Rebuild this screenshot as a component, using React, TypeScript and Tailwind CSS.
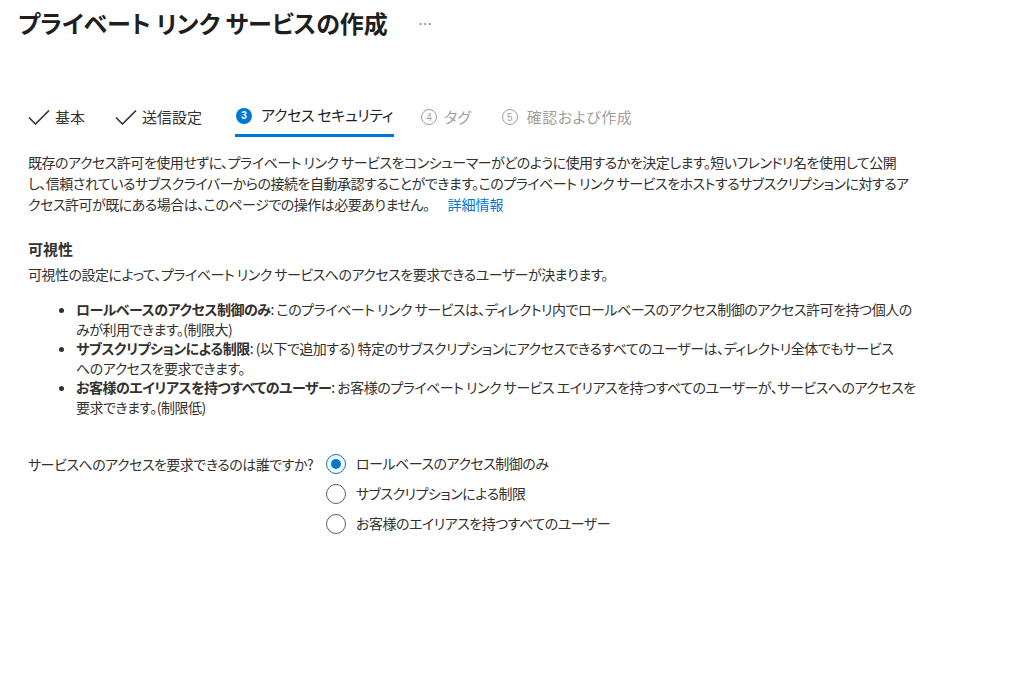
import React from 'react';

const jp = { fontFamily: '"Noto Sans CJK JP", "Noto Sans", sans-serif' };

function Check() {
  return (
    <svg width="22" height="16" viewBox="0 0 22 16" className="shrink-0">
      <path d="M1 8.5 L7.5 15 L21 1.5" fill="none" stroke="#323130" strokeWidth="1.6" />
    </svg>
  );
}

function Radio({ checked, label }: { checked?: boolean; label: string }) {
  return (
    <div className="flex items-center gap-[10px] h-[20px]">
      <span
        className={
          checked
            ? 'w-[20px] h-[20px] rounded-full border border-[#0078d4] flex items-center justify-center shrink-0'
            : 'w-[20px] h-[20px] rounded-full border border-[#605e5c] shrink-0'
        }
      >
        {checked && <span className="w-[10px] h-[10px] rounded-full bg-[#0078d4]" />}
      </span>
      <span className="text-[14px] text-[#323130]">{label}</span>
    </div>
  );
}

export default function App() {
  return (
    <div className="w-[1024px] h-[685px] bg-white text-[#323130] overflow-hidden [font-feature-settings:'palt']" style={jp}>
      {/* Header */}
      <div className="flex items-center pl-[18px] pt-[2px] h-[44px]">
        <h1 className="text-[24px] font-semibold text-[#201f1e]">プライベート リンク サービスの作成</h1>
        <span className="ml-[30px] text-[14px] text-[#605e5c] tracking-[1px]">…</span>
      </div>

      {/* Steps */}
      <div className="flex items-end pl-[28px] mt-[60px] h-[33px] text-[15px]">
        <div className="flex items-center gap-[5px] h-full pb-[7px]">
          <Check />
          <span>基本</span>
        </div>
        <div className="flex items-center gap-[5px] h-full pb-[7px] ml-[30px]">
          <Check />
          <span>送信設定</span>
        </div>
        <div className="flex items-center gap-[9px] h-full pb-[7px] ml-[33px] px-[1px] border-b-[3px] border-[#0078d4]">
          <span className="w-[16px] h-[16px] rounded-full bg-[#0078d4] text-white text-[10px] font-bold flex items-center justify-center" style={{ fontFamily: '"Liberation Sans", sans-serif' }}>3</span>
          <span className="text-[#201f1e] tracking-[-0.3px]">アクセス セキュリティ</span>
        </div>
        <div className="flex items-center gap-[7px] h-full pb-[7px] ml-[27px] text-[#a19f9d]">
          <span className="w-[16px] h-[16px] rounded-full border border-[#a19f9d] text-[10px] flex items-center justify-center" style={{ fontFamily: '"Liberation Sans", sans-serif' }}>4</span>
          <span>タグ</span>
        </div>
        <div className="flex items-center gap-[9px] h-full pb-[7px] ml-[31px] text-[#a19f9d]">
          <span className="w-[16px] h-[16px] rounded-full border border-[#a19f9d] text-[10px] flex items-center justify-center" style={{ fontFamily: '"Liberation Sans", sans-serif' }}>5</span>
          <span className="tracking-[0.5px]">確認および作成</span>
        </div>
      </div>

      {/* Intro */}
      <p className="pl-[28px] mt-[15px] text-[14px] leading-[21px] tracking-[-0.5px] whitespace-nowrap">
        既存のアクセス許可を使用せずに、プライベート リンク サービスをコンシューマーがどのように使用するかを決定します。短いフレンドリ名を使用して公開
        <br />
        し、信頼されているサブスクライバーからの接続を自動承認することができます。このプライベート リンク サービスをホストするサブスクリプションに対するア
        <br />
        クセス許可が既にある場合は、このページでの操作は必要ありません。
        <a className="ml-[18px] text-[#0078d4] tracking-normal">詳細情報</a>
      </p>

      {/* Visibility */}
      <h2 className="pl-[28px] mt-[23px] text-[15px] font-bold leading-[22px]">可視性</h2>
      <p className="pl-[28px] mt-[4px] text-[14px] leading-[21px] tracking-[-0.5px] whitespace-nowrap">
        可視性の設定によって、プライベート リンク サービスへのアクセスを要求できるユーザーが決まります。
      </p>

      <ul className="pl-[76px] mt-[15px] list-disc text-[14px] leading-[19.6px] tracking-[-0.5px] whitespace-nowrap">
        <li>
          <b className="font-bold">ロールベースのアクセス制御のみ</b>: このプライベート リンク サービスは、ディレクトリ内でロールベースのアクセス制御のアクセス許可を持つ個人の
          <br />
          みが利用できます。(制限大)
        </li>
        <li>
          <b className="font-bold">サブスクリプションによる制限</b>: (以下で追加する) 特定のサブスクリプションにアクセスできるすべてのユーザーは、ディレクトリ全体でもサービス
          <br />
          へのアクセスを要求できます。
        </li>
        <li>
          <b className="font-bold">お客様のエイリアスを持つすべてのユーザー</b>: お客様のプライベート リンク サービス エイリアスを持つすべてのユーザーが、サービスへのアクセスを
          <br />
          要求できます。(制限低)
        </li>
      </ul>

      {/* Radio group */}
      <div className="flex pl-[28px] mt-[36px]">
        <div className="w-[298px] text-[14px] leading-[20px] tracking-[-0.5px] whitespace-nowrap">サービスへのアクセスを要求できるのは誰ですか?</div>
        <div className="flex flex-col gap-[10px] tracking-[-0.5px]">
          <Radio checked label="ロールベースのアクセス制御のみ" />
          <Radio label="サブスクリプションによる制限" />
          <Radio label="お客様のエイリアスを持つすべてのユーザー" />
        </div>
      </div>
    </div>
  );
}
